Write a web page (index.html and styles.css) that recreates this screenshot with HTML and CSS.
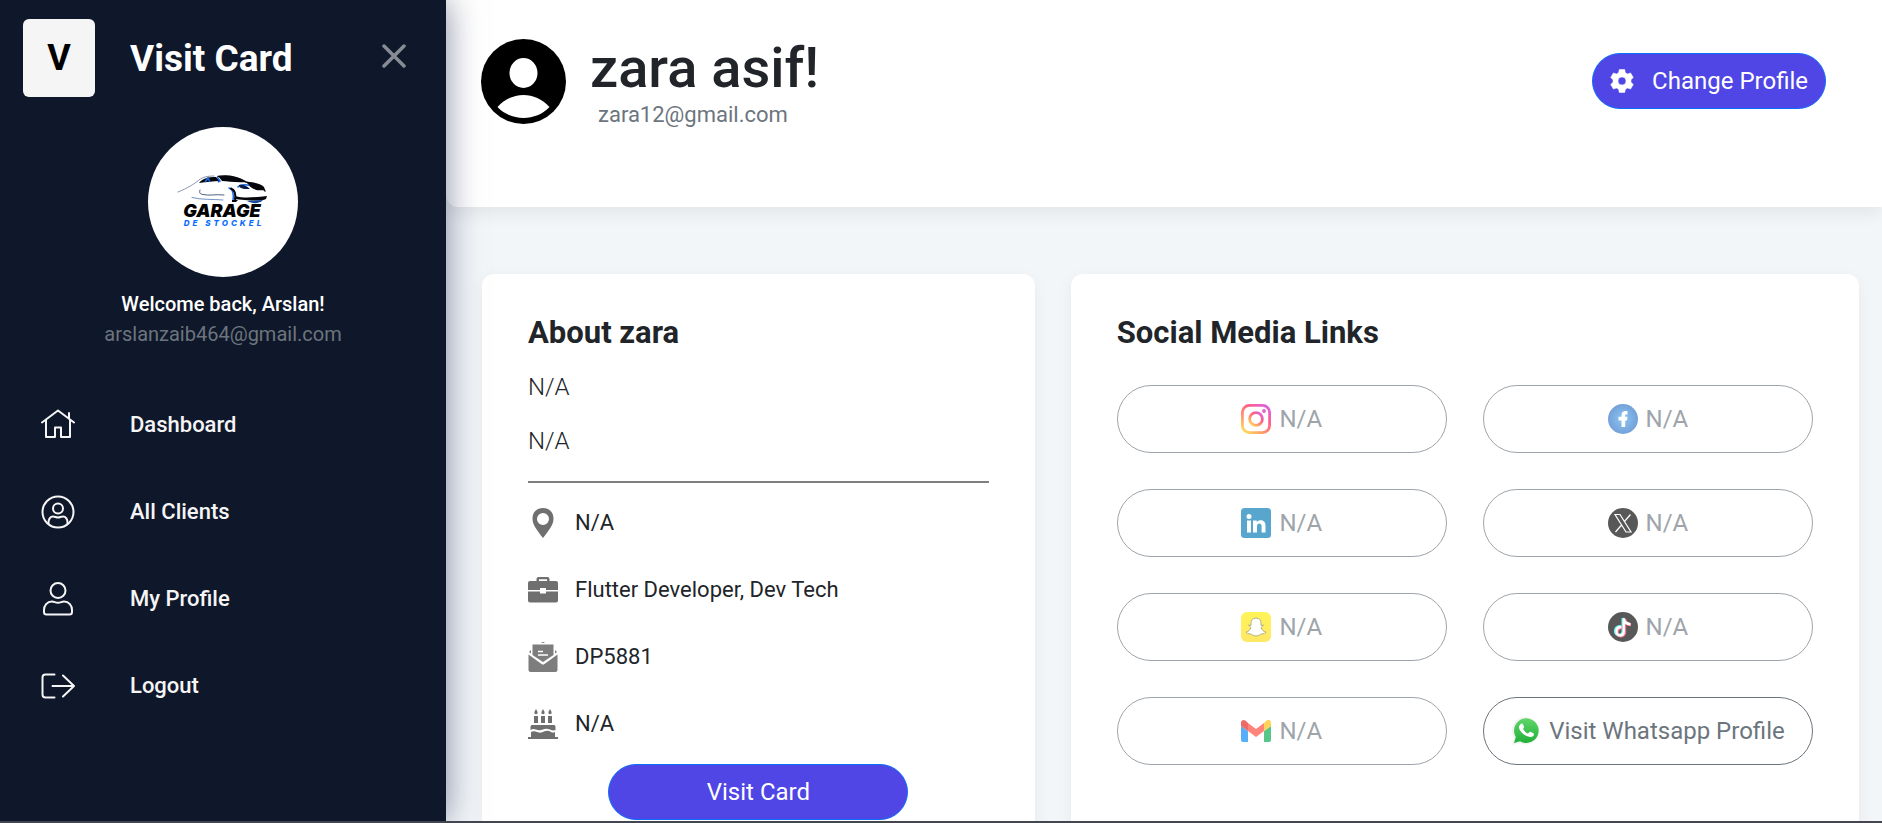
FILE: index.html
```html
<!DOCTYPE html>
<html lang="en">
<head>
<meta charset="utf-8">
<meta name="viewport" content="width=device-width, initial-scale=1">
<title>Visit Card</title>
<link rel="stylesheet" href="styles.css">
</head>
<body>
<div class="app">
  <aside class="sidebar">
    <div class="brand">
      <span class="brand-tile">V</span>
      <span class="brand-name">Visit Card</span>
      <button class="close" type="button" aria-label="Close menu">
        <svg width="24" height="24" viewBox="0 0 24 24" fill="none" stroke="currentColor" stroke-width="3.500" stroke-linecap="round"><path d="M2 2L22 22M22 2L2 22"/></svg>
      </button>
    </div>
    <div class="account">
      <svg class="account-logo" viewBox="0 0 150 150" role="img" aria-label="Garage de Stockel">
        <circle cx="75" cy="75" r="75" fill="#fff"/>
        <g fill="none" stroke-linecap="round">
          <path d="M30 65C40 61 46 57 51 53C55 50 59 49 66 49" stroke="#5a6b88" stroke-width="0.700"/>
          <path d="M70 49.500C84 48 91 51 98 55C109 57 115 60 117 64" stroke="#0b0c12" stroke-width="1.500"/>
          <path d="M52 63C51 66 52 67 55 67.500C61 69 68 67 76 68" stroke="#24395f" stroke-width="0.800"/>
          <path d="M44 70.500C53 73 65 72 75 73" stroke="#4f75b8" stroke-width="0.800"/>
          <path d="M81 61C85 62 86 67 85 74" stroke="#1769e8" stroke-width="1.500"/>
          <path d="M83 61.500C87 63 88 68 87 74" stroke="#06070c" stroke-width="2"/>
          <path d="M90 60C92 57 101 57 105 60" stroke="#1769e8" stroke-width="1.500"/>
        </g>
        <path d="M51 56C55 51 60 50 68 50L72 54C65 54 59 55 51 56Z" fill="#06070c"/>
        <path d="M57 55L60 51L62 55M69 50L72 54L70 55" fill="none" stroke="#1769e8" stroke-width="1.500"/>
        <path d="M70 49C82 48 91 50 98 55C88 56 80 54 74 54Z" fill="#06070c"/>
        <path d="M91 58C95 57 99 59 102 62H96C92 61 91 60 91 58Z" fill="#0a1c45"/>
        <path d="M98 55C106 55 114 57 116 60L117 63C111 64 104 63 101 58Z" fill="#06070c"/>
        <path d="M87 69C97 72 108 70 119 69L118 72C113 75 96 73 86 72Z" fill="#06070c"/>
        <path d="M84 73H90L88 75H84Z" fill="#06070c"/>
        <path d="M99 74L115 73C111 77 105 77 99 74Z" fill="#174a9b"/>
        <text class="logo-title" x="74" y="90" text-anchor="middle">GARAGE</text>
        <text class="logo-sub" x="76" y="99" text-anchor="middle">DE STOCKEL</text>
      </svg>
      <p class="account-welcome">Welcome back, Arslan!</p>
      <p class="account-email">arslanzaib464@gmail.com</p>
    </div>
    <nav class="nav">
      <a class="nav-item" href="#dashboard">
        <svg class="nav-icon" viewBox="0 0 34 34"><path d="M1 14.500L17 2.500L33 14.500M5 12V29H14V19.500H20V29H29V12M28 10.500V5"/></svg>
        Dashboard
      </a>
      <a class="nav-item" href="#clients">
        <svg class="nav-icon" viewBox="0 0 34 34"><circle cx="17" cy="17" r="15.500"/><circle cx="17" cy="13.500" r="5"/><path d="M7.500 28.500C7 24 9.500 21.500 12 21.500C14 21.500 15 22.500 17 22.500S20 21.500 22 21.500C24.500 21.500 27 24 26.500 28.500"/></svg>
        All Clients
      </a>
      <a class="nav-item" href="#profile">
        <svg class="nav-icon" viewBox="0 0 34 34"><circle cx="17" cy="8.500" r="7.500"/><path d="M11 19.500C13.500 19.500 14 20.800 17 20.800S20.500 19.500 23 19.500C28 19.500 31 23.500 31 28V30Q31 32.500 28.500 32.500H5.500Q3 32.500 3 30V28C3 23.500 6 19.500 11 19.500Z"/></svg>
        My Profile
      </a>
      <a class="nav-item" href="#logout">
        <svg class="nav-icon" viewBox="0 0 34 34"><path d="M13.500 5.500H4.500Q1.500 5.500 1.500 8.500V25.500Q1.500 28.500 4.500 28.500H13.500M11.500 17H33M22 6.500L33 17L22 27.500"/></svg>
        Logout
      </a>
    </nav>
  </aside>

  <main class="main">
    <header class="header">
      <svg class="header-avatar" viewBox="0 0 85 85"><circle cx="42.500" cy="42.500" r="42.500"/><ellipse cx="42.500" cy="34" rx="14" ry="15" fill="#fff"/><path d="M16.500 68C31 52 54 52 68.500 68C55 82.500 30 82.500 16.500 68Z" fill="#fff"/></svg>
      <div class="header-text">
        <h1 class="header-name">zara asif!</h1>
        <p class="header-email">zara12@gmail.com</p>
      </div>
      <button class="primary header-button" type="button">
        <svg width="24" height="24" viewBox="0 0 24 24" fill="currentColor"><path fill-rule="evenodd" d="M9.300 0.500H14.700L15.400 3.700L17.500 4.900L20.600 3.900L23.300 8.500L21 10.700V13.300L23.300 15.500L20.600 20.100L17.500 19.100L15.400 20.300L14.700 23.500H9.300L8.600 20.300L6.500 19.100L3.400 20.100L0.700 15.500L3 13.300V10.700L0.700 8.500L3.400 3.900L6.500 4.900L8.600 3.700ZM12 8A4 4 0 1 0 12 16A4 4 0 1 0 12 8Z" stroke="currentColor" stroke-width="0.500" stroke-linejoin="round"/></svg>
        Change Profile
      </button>
    </header>

    <div class="columns">
      <div class="column column-about">
        <section class="card">
          <h2 class="card-title">About zara</h2>
          <p class="about-line">N/A</p>
          <p class="about-line">N/A</p>
          <hr class="rule">
          <ul class="facts">
            <li class="fact">
              <svg class="icon" viewBox="0 0 30 30" fill="#6f6f6f"><path fill-rule="evenodd" d="M15 0C8.500 0 4.500 4.500 4.500 10.500C4.500 17 9 22 15 30C21 22 25.500 17 25.500 10.500C25.500 4.500 21.500 0 15 0ZM15 5A6 6 0 1 1 15 17A6 6 0 1 1 15 5Z"/></svg>
              N/A
            </li>
            <li class="fact">
              <svg class="icon" viewBox="0 0 30 30" fill="#6f6f6f"><path fill-rule="evenodd" d="M8.500 6V4Q8.500 2 10.500 2H19.500Q21.500 2 21.500 4V6H28Q30 6 30 8V15H18V13H12V15H0V8Q0 6 2 6ZM11 6H19V4.300H11ZM0 16.500H12V18.500H18V16.500H30V25.500Q30 27.500 28 27.500H2Q0 27.500 0 25.500Z"/></svg>
              Flutter Developer, Dev Tech
            </li>
            <li class="fact">
              <svg class="icon" viewBox="0 0 30 30" fill="#7d7d7d"><path d="M13 1Q15 -1 17 1ZM4.500 2.500H25.500V13L15 20L4.500 13ZM3 8V11.500L1 10ZM27 8V11.500L29 10ZM0.500 12.500L13.500 22Q15 23 16.500 22L29.500 12.500V28Q29.500 30 27.500 30H2.500Q0.500 30 0.500 28Z"/><path d="M10 9.500H15M10 13H20" stroke="#fff" stroke-width="1.500"/></svg>
              DP5881
            </li>
            <li class="fact">
              <svg class="icon" viewBox="0 0 30 30" fill="#6f6f6f"><path d="M6 7H10V14H6ZM13 7H17V14H13ZM20 7H24V14H20ZM8 0Q10 3 9.500 4.500Q8 6 6.500 4.500Q6 3 8 0ZM15 0Q17 3 16.500 4.500Q15 6 13.500 4.500Q13 3 15 0ZM22 0Q24 3 23.500 4.500Q22 6 20.500 4.500Q20 3 22 0ZM4 16H26Q27.500 16 27.500 18V21Q25 22 22 20.500Q18 19 15 20.500Q11 22 8 20.500Q5 19.500 2.500 21V18Q2.500 16 4 16ZM3 23Q6 21.500 9 23Q13 24.500 16 22.500Q20 21 23 23Q25 24 27 23V28H30V30H0V28H3Z"/></svg>
              N/A
            </li>
          </ul>
          <button class="primary card-button" type="button">Visit Card</button>
        </section>
      </div>

      <div class="column column-social">
        <section class="card">
          <h2 class="card-title">Social Media Links</h2>
          <div class="links">
            <button class="link" type="button" disabled>
              <svg class="icon" viewBox="0 0 30 30"><defs><linearGradient id="ig" x1="0.100" y1="1" x2="0.900" y2="0"><stop offset="0" stop-color="#ffc800"/><stop offset="0.350" stop-color="#ff5a1e"/><stop offset="0.650" stop-color="#ff0c48"/><stop offset="1" stop-color="#cb0fd6"/></linearGradient></defs><g fill="none" stroke="url(#ig)" stroke-width="2.800"><rect x="1.400" y="1.400" width="27.200" height="27.200" rx="7"/><circle cx="15" cy="15" r="6.400"/></g><circle cx="23" cy="7" r="1.900" fill="#d311a8"/></svg>
              N/A
            </button>
            <button class="link" type="button" disabled>
              <svg class="icon" viewBox="0 0 30 30"><defs><radialGradient id="fb"><stop offset="0" stop-color="#4fa6ee"/><stop offset="1" stop-color="#2b70c4"/></radialGradient></defs><circle cx="15" cy="15" r="15" fill="url(#fb)"/><path d="M13.500 23V16.500H10.500V12.800H13.500V11C13.500 8 15.300 7 17.500 7H19.500V10.500H18.200C17.400 10.500 17.200 11 17.200 11.700V12.800H19.500L19 16.500H17.200V23Z" fill="#fff"/></svg>
              N/A
            </button>
            <button class="link" type="button" disabled>
              <svg class="icon" viewBox="0 0 30 30"><rect width="30" height="30" rx="3.500" fill="#0077b5"/><g fill="#fff"><circle cx="8" cy="8.500" r="2.500"/><path d="M6 12.500H10V24.500H6ZM12 12.500H15.800V14.200C18 11.200 24.500 11.500 24.500 17.500V24.500H20.600V18C20.600 14.500 16 14.500 16 18V24.500H12Z"/></g></svg>
              N/A
            </button>
            <button class="link" type="button" disabled>
              <svg class="icon" viewBox="0 0 30 30"><circle cx="15" cy="15" r="15" fill="#000"/><path d="M7 6.500H12L23 24H18ZM22.500 6.500L16 14M14 16.500L7.500 24" fill="none" stroke="#fff" stroke-width="1.200"/></svg>
              N/A
            </button>
            <button class="link" type="button" disabled>
              <svg class="icon" viewBox="0 0 30 30"><defs><linearGradient id="sc" x1="0" y1="0" x2="0" y2="1"><stop offset="0" stop-color="#fff000"/><stop offset="1" stop-color="#ffdb12"/></linearGradient></defs><rect width="30" height="30" rx="6" fill="url(#sc)"/><path d="M15 6C11.500 6 10 8.500 10 11V13.500L7.500 13L9.800 15.500C9.300 18 7.500 19.500 5 20C6 21.800 7.500 21.500 9 22C11 22 12 24 15 24S19 22 21 22C22.500 21.500 24 21.800 25 20C22.500 19.500 20.700 18 20.200 15.500L22.500 13L20 13.500V11C20 8.500 18.500 6 15 6Z" fill="#fff" stroke="#8f8648" stroke-width="1" stroke-linejoin="round"/></svg>
              N/A
            </button>
            <button class="link" type="button" disabled>
              <svg class="icon" viewBox="0 0 30 30"><circle cx="15" cy="15" r="15" fill="#000"/><g fill="none" stroke-width="3"><path d="M13 14.500C5.500 14.500 6 23 11.500 23C14 23 15 21 15 19.500V6C15.500 10 18 11.500 21.500 11.800" stroke="#25f4ee"/><path d="M14.500 15.500C7.500 15.500 8 24.500 13.200 24C15.500 23.500 16.700 22 16.700 20V7C17.200 11 20 12.500 23 12.800" stroke="#fe2c55"/><path d="M13.500 15C6.800 15 7.200 23.500 12.300 23.500C14.700 23.300 15.800 21.800 15.800 19.800V6.500C16.300 10.500 19 12 22.500 12.300" stroke="#fff" stroke-width="2.300"/></g></svg>
              N/A
            </button>
            <button class="link" type="button" disabled>
              <svg class="icon" viewBox="0 0 30 30"><path d="M0 10L7 15V26H2Q0 26 0 24Z" fill="#0085f7"/><path d="M30 10L23 15V26H28Q30 26 30 24Z" fill="#00a94b"/><path d="M23 7L25 5Q28 2.500 30 5.500V10L23 15Z" fill="#ffbc00"/><path d="M7 7L15 13L23 7V15L15 21L7 15Z" fill="#ff4131"/><path d="M0 10V6Q1.500 2.500 5 5L7 7V15Z" fill="#e51c19"/></svg>
              N/A
            </button>
            <button class="link" type="button">
              <svg class="icon" viewBox="0 0 30 30"><defs><linearGradient id="wa" x1="0" y1="0" x2="0" y2="1"><stop offset="0" stop-color="#60d66a"/><stop offset="1" stop-color="#20b038"/></linearGradient></defs><path d="M1 29L3 22A13.700 13.700 0 1 1 8.500 27Z" fill="#f1f2f2"/><path d="M3 27L4.800 21A12.300 12.300 0 1 1 9 25.200Z" fill="url(#wa)"/><path d="M9.500 8.200C10.500 7.200 11.700 7.500 12.100 8.500L13 10.700C13.200 11.400 12.500 12.200 12 12.800C13 15 14.500 16.500 17 17.600L18.500 16C19 15.500 19.500 15.600 20 15.900L22.500 17.200C23.300 17.700 22.900 19.500 22 20.300C18.500 23 8 17 8 11C8 10 8.700 9 9.500 8.200Z" fill="#fff"/></svg>
              Visit Whatsapp Profile
            </button>
          </div>
        </section>
      </div>
    </div>
  </main>
</div>
</body>
</html>
```
FILE: styles.css
```css
* {
  box-sizing: border-box;
}

body {
  margin: 0;
  font-family: Roboto, "Liberation Sans", sans-serif;
  font-size: 22px;
  color: #212529;
  background: #f2f6f9;
}

h1, h2, p, ul {
  margin: 0;
  padding: 0;
}

button {
  font: inherit;
  cursor: pointer;
}

.app {
  display: flex;
  height: 100vh;
  overflow: hidden;
  border-bottom: 2px solid #43454f;
}

/* Sidebar */
.sidebar {
  position: relative;
  z-index: 1;
  flex: none;
  width: 446px;
  color: #f5f5f5;
  background: #0f172a;
  box-shadow: 0 0 32px rgba(15, 23, 66, 0.5);
}

.brand {
  display: flex;
  align-items: center;
  padding: 19px 40px 0 23px;
}

.brand-tile {
  display: grid;
  place-items: center;
  width: 72px;
  height: 78px;
  margin-right: 35px;
  border-radius: 6px;
  font-size: 36px;
  font-weight: 700;
  color: #000;
  background: #f5f5f5;
}

.brand-name {
  font-size: 37px;
  font-weight: 700;
  color: #fff;
}

.close {
  display: flex;
  margin: 0 0 4px auto;
  padding: 0;
  border: 0;
  color: #878b94;
  background: none;
}

.account {
  display: flex;
  flex-direction: column;
  align-items: center;
  padding: 30px 0 32px;
  font-size: 20px;
  line-height: 30px;
}

.account-logo {
  width: 150px;
  height: 150px;
  margin-bottom: 12px;
}

.logo-title {
  font: italic 900 18px Inter, sans-serif;
  fill: #000;
}

.logo-sub {
  font: italic 800 8px Inter, sans-serif;
  letter-spacing: 3px;
  fill: #0a6cff;
}

.account-welcome {
  font-weight: 500;
  color: #fff;
}

.account-email {
  color: #6c757d;
}

.nav-item {
  display: flex;
  align-items: center;
  gap: 55px;
  height: 87px;
  padding-left: 41px;
  font-weight: 500;
  color: #f5f5f5;
  text-decoration: none;
}

.nav-icon {
  width: 34px;
  height: 34px;
  fill: none;
  stroke: currentColor;
  stroke-width: 2;
  stroke-linecap: round;
  stroke-linejoin: round;
}

/* Header */
.main {
  flex: 1;
  min-width: 0;
}

.header {
  display: flex;
  align-items: flex-start;
  min-height: 207px;
  padding: 38px 56px 0 35px;
  border-radius: 0 0 0 12px;
  background: #fff;
  box-shadow: 0 8px 16px rgba(0, 0, 0, 0.06);
}

.header-avatar {
  width: 85px;
  height: 85px;
  margin: 1px 24px 0 0;
}

.header-name {
  font-size: 56px;
  font-weight: 500;
  line-height: 60px;
}

.header-email {
  padding: 2px 0 0 8px;
  font-size: 22px;
  line-height: 30px;
  color: #6c757d;
}

.primary {
  display: flex;
  align-items: center;
  justify-content: center;
  height: 56px;
  border: 1px solid #0d6efd;
  border-radius: 28px;
  font-size: 24px;
  color: #fff;
  background: #4f46e5;
}

.header-button {
  gap: 18px;
  margin: 15px 0 0 auto;
  padding: 0 17px;
}

/* Cards: a 5/7 split of the twelve-part row */
.columns {
  display: flex;
  padding: 67px 5px 0 18px;
}

.column {
  display: flex;
  padding: 0 18px;
}

.column-about {
  width: calc(100% * 5 / 12);
}

.column-social {
  width: calc(100% * 7 / 12);
}

.card {
  flex: 1;
  padding: 41px 46px;
  border-radius: 12px;
  background: #fff;
  box-shadow: 0 4px 16px rgba(0, 0, 0, 0.05);
}

.card-title {
  font-size: 31px;
  font-weight: 700;
  line-height: 36px;
}

.about-line {
  margin-top: 18px;
  font-size: 24px;
  font-weight: 300;
  line-height: 36px;
}

.rule {
  height: 2px;
  margin: 22px 0 6px;
  border: 0;
  background: #7f7f7f;
}

.facts {
  list-style: none;
}

.fact {
  display: flex;
  align-items: center;
  gap: 17px;
  height: 67px;
}

.icon {
  flex: none;
  width: 30px;
  height: 30px;
}

.card-button {
  width: 300px;
  margin: 7px auto 0;
}

.links {
  display: grid;
  grid-template-columns: 1fr 1fr;
  gap: 36px;
  margin-top: 34px;
}

.link {
  display: flex;
  align-items: center;
  justify-content: center;
  gap: 8px;
  height: 68px;
  border: 1px solid #6c757d;
  border-radius: 34px;
  font-size: 24px;
  color: #6c757d;
  background: none;
}

.link:disabled {
  cursor: default;
  opacity: 0.65;
}
```
